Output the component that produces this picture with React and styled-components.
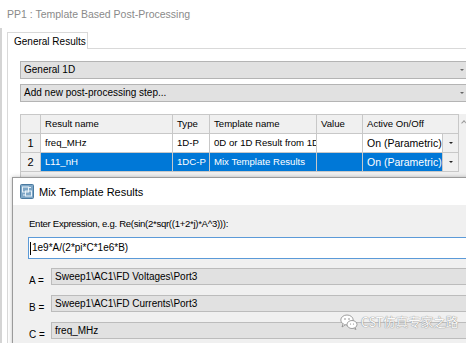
import React from 'react'
import styled, { createGlobalStyle } from 'styled-components'

const GlobalStyle = createGlobalStyle`
  html, body {
    margin: 0;
    padding: 0;
    background: #ffffff;
    overflow: hidden;
  }
  body {
    font-family: "Liberation Sans", Arial, sans-serif;
    color: #000;
  }
`

const Window = styled.div`
  position: relative;
  width: 466px;
  height: 343px;
  overflow: hidden;
  background: #fff;
`

const TitleBar = styled.div`
  height: 28px;
  line-height: 28px;
  padding-left: 7px;
  font-size: 10.5px;
  color: #8a8a8a;
  white-space: nowrap;
`

const Body = styled.div`
  border-left: 2px solid #d4d4d4;
  height: 315px;
  padding-left: 5px;
  padding-top: 4px;
  box-sizing: border-box;
`

const TabStrip = styled.div`
  display: flex;
  align-items: flex-end;
  height: 17px;
`

const Tab = styled.div`
  width: 81px;
  height: 17px;
  box-sizing: border-box;
  border: 1px solid #d9d9d9;
  border-bottom: none;
  background: #fff;
  font-size: 10px;
  line-height: 17px;
  padding-left: 6px;
  white-space: nowrap;
`

const TabFill = styled.div`
  flex: 1;
  border-bottom: 1px solid #d9d9d9;
`

const Panel = styled.div`
  border-left: 1px solid #d9d9d9;
  padding: 12px 0 0 12px;
  display: flex;
  flex-direction: column;
  gap: 5px;
  height: 100%;
`

const Combo = styled.div`
  position: relative;
  height: 18px;
  box-sizing: border-box;
  background: #e1e1e1;
  border: 1px solid #b4b4b4;
  border-right: none;
  font-size: 10px;
  line-height: 16px;
  padding-left: 3px;
  white-space: nowrap;
  &::after {
    content: '';
    position: absolute;
    right: 2px;
    top: 7px;
    border-left: 2px solid transparent;
    border-right: 2px solid transparent;
    border-top: 2px solid #666;
  }
`

const TableBox = styled.div`
  margin-top: 7px;
  display: flex;
  background: #f0f0f0;
  height: 80px;
`

const Grid = styled.div`
  display: grid;
  grid-template-columns: 20px 132px 37px 107px 46px 96px;
  grid-auto-rows: 19px;
  align-content: start;
  border-top: 1px solid #c8c8c8;
  border-left: 1px solid #c8c8c8;
`

const Cell = styled.div`
  box-sizing: border-box;
  border-right: 1px solid #c8c8c8;
  border-bottom: 1px solid #c8c8c8;
  line-height: 18px;
  padding-left: ${p => (p.$num ? '0' : '4px')};
  text-align: ${p => (p.$num ? 'center' : 'left')};
  white-space: nowrap;
  overflow: hidden;
  background: ${p => (p.$head || p.$num ? '#f0f0f0' : p.$sel ? '#0078d7' : '#fff')};
  color: ${p => (p.$sel && !p.$num ? '#fff' : '#000')};
  font-size: ${p => (p.$num ? '11px' : '9.6px')};
`

const ActiveCell = styled(Cell)`
  display: flex;
  padding-left: 0;
  background: ${p => (p.$sel ? '#0078d7' : '#fff')};
`

const ActiveText = styled.span`
  flex: 1;
  padding-left: 4px;
  font-size: 10.5px;
`

const DropButton = styled.span`
  width: 15px;
  background: #f0f0f0;
  border-left: 1px solid #c8c8c8;
  position: relative;
  &::after {
    content: '';
    position: absolute;
    left: 6px;
    top: 8px;
    border-left: 2px solid transparent;
    border-right: 2px solid transparent;
    border-top: 2px solid #222;
  }
`

const ScrollBar = styled.div`
  width: 8px;
  background: #f0f0f0;
  position: relative;
  &::after {
    content: '';
    position: absolute;
    left: 3px;
    top: 7px;
    width: 3px;
    height: 3px;
    border-left: 1px solid #999;
    border-top: 1px solid #999;
    transform: rotate(45deg);
  }
`

const Dialog = styled.div`
  position: absolute;
  left: 12px;
  top: 177px;
  width: 470px;
  height: 180px;
  border: 1px solid #9a9a9a;
  background: #f0f0f0;
  box-shadow: 0 0 4px rgba(0, 0, 0, 0.25);
`

const DialogHead = styled.div`
  height: 27px;
  background: #fff;
  display: flex;
  align-items: center;
  gap: 5px;
  padding-left: 7px;
  font-size: 11px;
`

const DialogBody = styled.div`
  padding: 11px 0 0 15px;
  display: flex;
  flex-direction: column;
`

const Prompt = styled.div`
  font-size: 9.6px;
  letter-spacing: -0.3px;
  padding-left: 1px;
  height: 15px;
  line-height: 15px;
  white-space: nowrap;
`

const ExprInput = styled.div`
  margin-top: 6px;
  height: 22px;
  box-sizing: border-box;
  background: #fff;
  border: 1px solid #5b9ad8;
  border-right: none;
  font-size: 10px;
  line-height: 20px;
  padding-left: 1px;
  display: flex;
  align-items: center;
`

const Caret = styled.span`
  width: 1px;
  height: 13px;
  background: #000;
  margin-right: 1px;
`

const Fields = styled.div`
  margin-top: 9px;
  display: grid;
  grid-template-columns: 22px 1fr;
  grid-auto-rows: 17px;
  row-gap: 10px;
  padding-left: 1px;
`

const FieldLabel = styled.div`
  font-size: 10px;
  height: 17px;
  line-height: 25px;
  white-space: nowrap;
`

const FieldBox = styled.div`
  height: 17px;
  box-sizing: border-box;
  background: #e1e1e1;
  border: 1px solid #bcbcbc;
  border-right: none;
  font-size: 10px;
  line-height: 15px;
  padding-left: 3px;
  white-space: nowrap;
`

const Watermark = styled.div`
  position: absolute;
  left: 340px;
  top: 312px;
  display: flex;
  align-items: center;
  gap: 3px;
  font-family: "Noto Sans CJK SC", "Liberation Sans", sans-serif;
  font-size: 12.5px;
  color: #fafafa;
  text-shadow: 0 0 1px #8a8a8a, 0 0 1px #8a8a8a;
`

const DialogIcon = () => (
  <svg width="14" height="15" viewBox="0 0 14 15">
    <rect x="0.5" y="0.5" width="13" height="14" rx="1" fill="#7ea6c6" stroke="#4a7aa0" />
    <rect x="2.5" y="3" width="6" height="5" fill="none" stroke="#e8f1f8" />
    <rect x="5.5" y="7" width="6" height="5" fill="none" stroke="#e8f1f8" />
    <path d="M3 11h2M9 3.5h2" stroke="#e8f1f8" />
  </svg>
)

const WeChatIcon = () => (
  <svg width="18" height="16" viewBox="0 0 18 16">
    <ellipse cx="7" cy="6" rx="6.2" ry="5" fill="#fff" stroke="#888" strokeWidth="0.8" />
    <path d="M3 10l-1 3 3-2" fill="#fff" stroke="#888" strokeWidth="0.8" />
    <ellipse cx="12" cy="10.5" rx="5" ry="4" fill="#fff" stroke="#888" strokeWidth="0.8" />
    <path d="M15 13.5l1 2-2.5-1.2" fill="#fff" stroke="#888" strokeWidth="0.8" />
    <circle cx="5" cy="5" r="0.8" fill="#888" />
    <circle cx="9" cy="5" r="0.8" fill="#888" />
    <circle cx="10.5" cy="10" r="0.6" fill="#888" />
    <circle cx="13.5" cy="10" r="0.6" fill="#888" />
  </svg>
)

const rows = [
  { n: '1', name: 'freq_MHz', type: '1D-P', tpl: '0D or 1D Result from 1D', sel: false },
  { n: '2', name: 'L11_nH', type: '1DC-P', tpl: 'Mix Template Results', sel: true },
]

const fields = [
  ['A =', 'Sweep1\\AC1\\FD Voltages\\Port3'],
  ['B =', 'Sweep1\\AC1\\FD Currents\\Port3'],
  ['C =', 'freq_MHz'],
]

export default function App() {
  return (
    <Window>
      <GlobalStyle />
      <TitleBar>PP1 : Template Based Post-Processing</TitleBar>
      <Body>
        <TabStrip>
          <Tab>General Results</Tab>
          <TabFill />
        </TabStrip>
        <Panel>
          <Combo>General 1D</Combo>
          <Combo>Add new post-processing step...</Combo>
          <TableBox>
            <Grid>
              <Cell $head />
              <Cell $head>Result name</Cell>
              <Cell $head>Type</Cell>
              <Cell $head>Template name</Cell>
              <Cell $head>Value</Cell>
              <Cell $head>Active On/Off</Cell>
              {rows.map(r => (
                <React.Fragment key={r.n}>
                  <Cell $num>{r.n}</Cell>
                  <Cell $sel={r.sel}>{r.name}</Cell>
                  <Cell $sel={r.sel}>{r.type}</Cell>
                  <Cell $sel={r.sel}>{r.tpl}</Cell>
                  <Cell $sel={r.sel} />
                  <ActiveCell $sel={r.sel}>
                    <ActiveText>On (Parametric)</ActiveText>
                    <DropButton />
                  </ActiveCell>
                </React.Fragment>
              ))}
            </Grid>
            <ScrollBar />
          </TableBox>
        </Panel>
      </Body>

      <Dialog>
        <DialogHead>
          <DialogIcon />
          Mix Template Results
        </DialogHead>
        <DialogBody>
          <Prompt>Enter Expression, e.g. Re(sin(2*sqr((1+2*j)*A^3))):</Prompt>
          <ExprInput>
            <Caret />
            1e9*A/(2*pi*C*1e6*B)
          </ExprInput>
          <Fields>
            {fields.map(([label, value]) => (
              <React.Fragment key={label}>
                <FieldLabel>{label}</FieldLabel>
                <FieldBox>{value}</FieldBox>
              </React.Fragment>
            ))}
          </Fields>
        </DialogBody>
      </Dialog>

      <Watermark>
        <WeChatIcon />
        CST仿真专家之路
      </Watermark>
    </Window>
  )
}
